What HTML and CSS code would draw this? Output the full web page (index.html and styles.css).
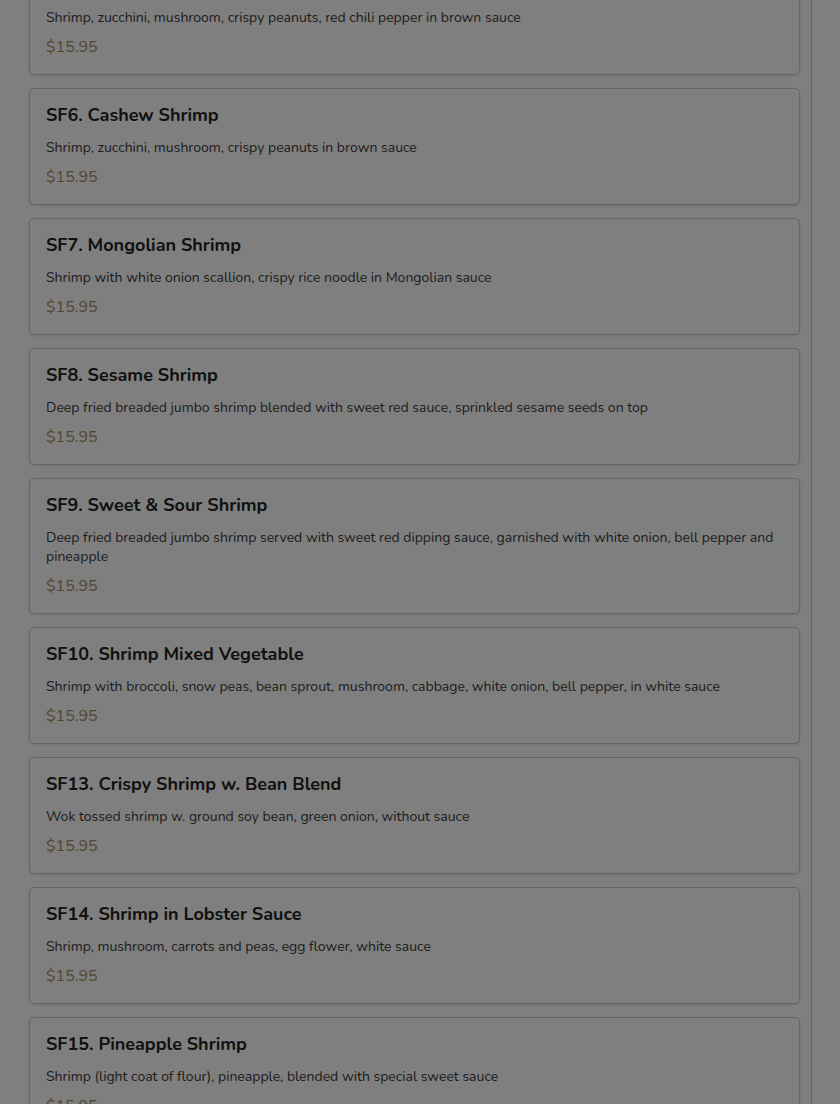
FILE: index.html
```html
<!DOCTYPE html>
<html>
<head>
<meta charset="utf-8">
<link rel="stylesheet" href="styles.css">
</head>
<body>
<div class="page">
  <div class="list">
    <div class="card">
      <h3 class="title">SF5. Kung Pao Shrimp</h3>
      <p class="desc">Shrimp, zucchini, mushroom, crispy peanuts, red chili pepper in brown sauce</p>
      <div class="price">$15.95</div>
    </div>
    <div class="card">
      <h3 class="title">SF6. Cashew Shrimp</h3>
      <p class="desc">Shrimp, zucchini, mushroom, crispy peanuts in brown sauce</p>
      <div class="price">$15.95</div>
    </div>
    <div class="card">
      <h3 class="title">SF7. Mongolian Shrimp</h3>
      <p class="desc">Shrimp with white onion scallion, crispy rice noodle in Mongolian sauce</p>
      <div class="price">$15.95</div>
    </div>
    <div class="card">
      <h3 class="title">SF8. Sesame Shrimp</h3>
      <p class="desc">Deep fried breaded jumbo shrimp blended with sweet red sauce, sprinkled sesame seeds on top</p>
      <div class="price">$15.95</div>
    </div>
    <div class="card">
      <h3 class="title">SF9. Sweet &amp; Sour Shrimp</h3>
      <p class="desc">Deep fried breaded jumbo shrimp served with sweet red dipping sauce, garnished with white onion, bell pepper and pineapple</p>
      <div class="price">$15.95</div>
    </div>
    <div class="card">
      <h3 class="title">SF10. Shrimp Mixed Vegetable</h3>
      <p class="desc">Shrimp with broccoli, snow peas, bean sprout, mushroom, cabbage, white onion, bell pepper, in white sauce</p>
      <div class="price">$15.95</div>
    </div>
    <div class="card">
      <h3 class="title">SF13. Crispy Shrimp w. Bean Blend</h3>
      <p class="desc">Wok tossed shrimp w. ground soy bean, green onion, without sauce</p>
      <div class="price">$15.95</div>
    </div>
    <div class="card">
      <h3 class="title">SF14. Shrimp in Lobster Sauce</h3>
      <p class="desc">Shrimp, mushroom, carrots and peas, egg flower, white sauce</p>
      <div class="price">$15.95</div>
    </div>
    <div class="card">
      <h3 class="title">SF15. Pineapple Shrimp</h3>
      <p class="desc">Shrimp (light coat of flour), pineapple, blended with special sweet sauce</p>
      <div class="price">$15.95</div>
    </div>
  </div>
</div>
<div class="overlay"></div>
</body>
</html>
```
FILE: styles.css
```css
* { box-sizing: border-box; }
html, body { margin: 0; padding: 0; background: #fff; overflow: hidden; }
body { font-family: "Nunito", "Lato", "Noto Sans", sans-serif; color: #333; }
.page {
  width: 812px;
  border-right: 1px solid #ccc;
  min-height: 1300px;
  padding: 0 11px 0 29px;
}
.list {
  display: flex;
  flex-direction: column;
  gap: 13px;
  margin-top: -42px;
}
.card {
  border: 1px solid #ccc;
  border-radius: 5px;
  background: #fff;
  padding: 14px 16px 15px 16px;
  box-shadow: 0 1px 3px rgba(0,0,0,0.12);
}
.title {
  margin: 0;
  font-size: 18px;
  line-height: 24px;
  font-weight: 700;
  color: #222;
}
.desc {
  margin: 10.5px 0 0;
  font-size: 14px;
  line-height: 19px;
  color: #3a3a3a;
}
.price {
  margin-top: 8.5px;
  font-size: 16px;
  line-height: 24px;
  color: #a48d62;
}
.overlay {
  position: fixed;
  inset: 0;
  background: rgba(0,0,0,0.5);
}
```
